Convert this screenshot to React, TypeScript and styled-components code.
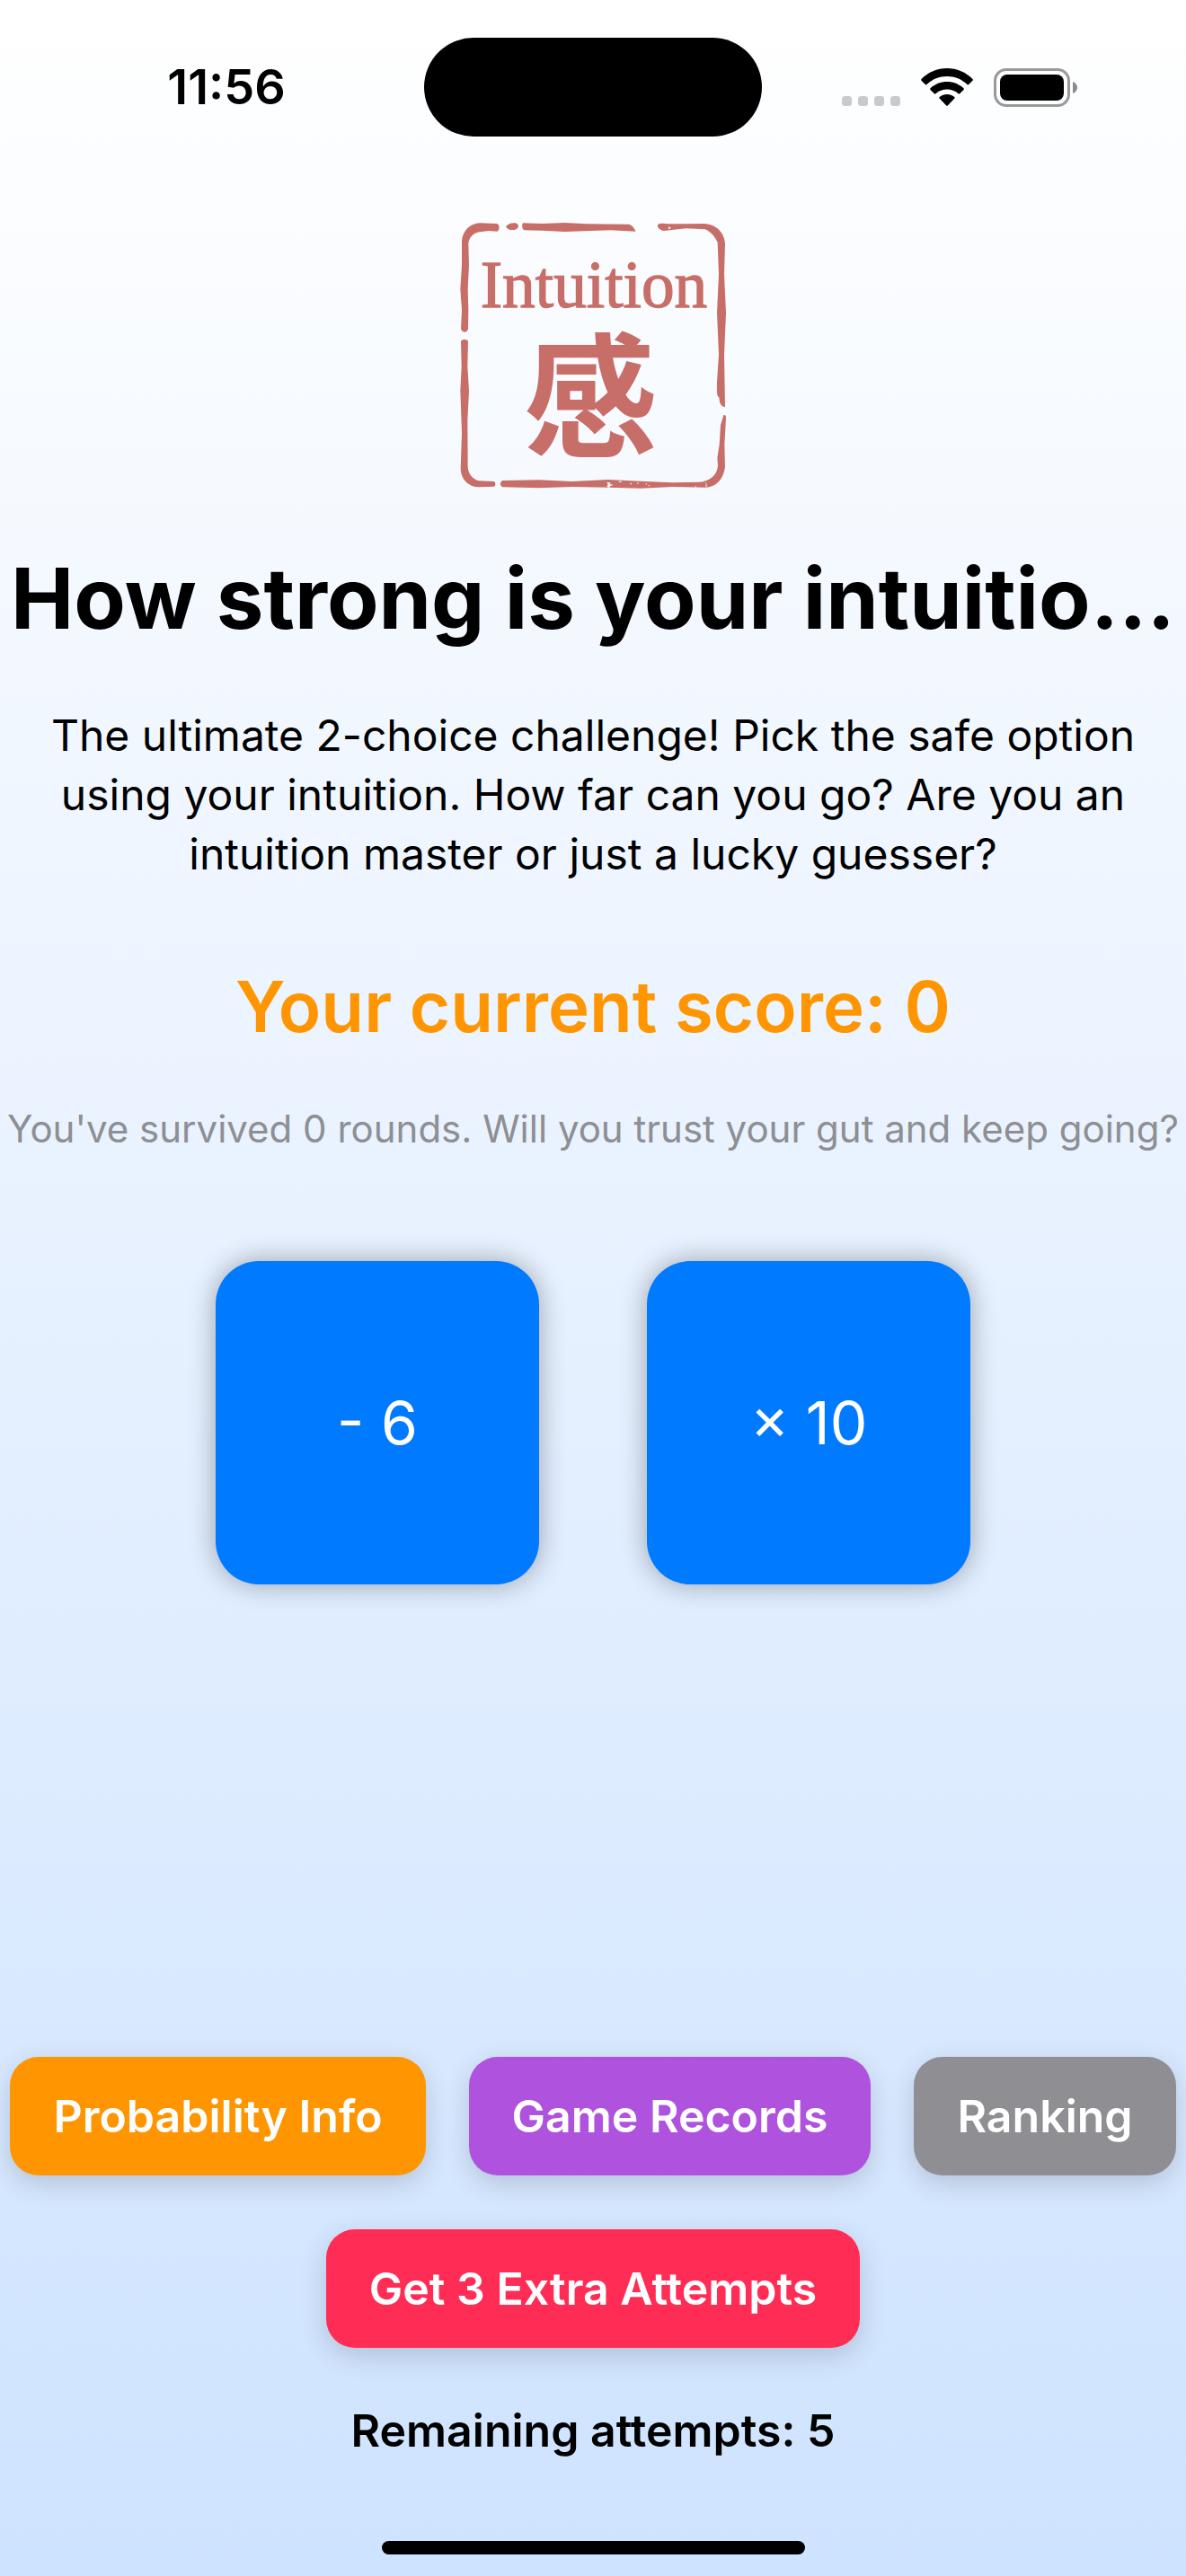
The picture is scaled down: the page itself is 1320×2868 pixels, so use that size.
import React from "react";
import styled, { createGlobalStyle } from "styled-components";

const GlobalStyle = createGlobalStyle`
  *, *::before, *::after { box-sizing: border-box; }
  body {
    margin: 0;
    font-family: Inter, "Liberation Sans", sans-serif;
    color: #000;
  }
`;

const Screen = styled.div`
  display: flex;
  flex-direction: column;
  min-height: 100vh;
  background: linear-gradient(#ffffff, #cee3ff);
`;

const StatusBar = styled.header`
  display: grid;
  grid-template-columns: 1fr auto 1fr;
  align-items: center;
  padding: 42px 0 34px;
`;

const Clock = styled.time`
  justify-self: center;
  padding-left: 32px;
  font-size: 54px;
  font-weight: 600;
  line-height: 60px;
`;

const Island = styled.div`
  width: 376px;
  height: 110px;
  border-radius: 55px;
  background: #000;
`;

const StatusIcons = styled.div`
  display: flex;
  align-items: center;
  justify-self: center;
  gap: 23px;
  padding-right: 32px;
`;

const Main = styled.main`
  flex: 1;
  display: flex;
  flex-direction: column;
  align-items: center;
  gap: 60px;
  padding-top: 60px;
  text-align: center;
`;

const Seal = styled.svg`
  display: block;
  width: 300px;
  height: 300px;
  fill: #c86e69;
`;

const Title = styled.h1`
  max-width: 100%;
  margin: 0;
  font-size: 94px;
  font-weight: 700;
  line-height: 120px;
  white-space: nowrap;
`;

const Lead = styled.p`
  margin: 0;
  padding: 0 48px 28px;
  font-size: 48px;
  line-height: 66px;
`;

const Score = styled.h2`
  margin: 0;
  color: #ff9500;
  font-size: 78px;
  font-weight: 600;
  line-height: 98px;
`;

const Hint = styled.p`
  margin: 0;
  color: #8e8e93;
  font-size: 42px;
  line-height: 54px;
  white-space: nowrap;
`;

const Choices = styled.div`
  display: flex;
  justify-content: center;
  gap: 120px;
  padding: 60px 0;
`;

const ChoiceButton = styled.button`
  width: 360px;
  height: 360px;
  padding: 0;
  border: 0;
  border-radius: 48px;
  background: #007aff;
  box-shadow: 0 0 30px rgba(0, 0, 0, 0.33);
  color: #fff;
  font: 400 66px Inter, "Liberation Sans", sans-serif;
  cursor: pointer;
`;

const Actions = styled.div`
  display: flex;
  flex-wrap: wrap;
  justify-content: center;
  gap: 60px 48px;
  margin-top: auto;
`;

const ActionButton = styled.button<{ $color: string }>`
  height: 132px;
  padding: 0 48px;
  border: 0;
  border-radius: 32px;
  background: ${(p) => p.$color};
  box-shadow: 0 9px 30px rgba(0, 0, 0, 0.16);
  color: #fff;
  font: 600 50px Inter, "Liberation Sans", sans-serif;
  white-space: nowrap;
  cursor: pointer;
`;

const Remaining = styled.p`
  margin: 0;
  font-size: 50px;
  font-weight: 600;
  line-height: 64px;
`;

const HomeArea = styled.footer`
  display: flex;
  justify-content: center;
  padding: 91px 0 24px;
`;

const HomeIndicator = styled.div`
  width: 471px;
  height: 15px;
  border-radius: 8px;
  background: #000;
`;

function SignalDots() {
  return (
    <svg width="65" height="43" viewBox="0 0 65 43" fill="#c9cacb" aria-hidden="true">
      {[0, 18, 36, 54].map((x) => (
        <rect key={x} x={x} y="31" width="11" height="11" rx="3.5" />
      ))}
    </svg>
  );
}

function Wifi() {
  return (
    <svg width="58" height="43" viewBox="0 0 58 43" aria-hidden="true">
      <path d="M29 0C40 0 50 4.400 57.500 12C58 12.500 58 13.200 57.500 13.700L53.200 18C52.700 18.500 52 18.500 51.500 18C45.500 12.200 37.500 9 29 9S12.500 12.200 6.500 18C6 18.500 5.300 18.500 4.800 18L.5 13.700C0 13.200 0 12.500 .5 12C8 4.400 18 0 29 0Z" />
      <path d="M29 15C36 15 42.500 17.600 47.500 22.200C48 22.700 48 23.400 47.500 23.900L43.200 28.200C42.700 28.700 42 28.700 41.500 28.200C38 25.200 33.700 23.600 29 23.600S20 25.200 16.500 28.200C16 28.700 15.300 28.700 14.800 28.200L10.500 23.900C10 23.400 10 22.700 10.500 22.200C15.500 17.600 22 15 29 15Z" />
      <path d="M29 29C32 29 35 30 37.300 31.900C37.900 32.400 37.900 33.100 37.400 33.600L30 41.300C29.400 42 28.600 42 28 41.300L20.600 33.600C20.100 33.100 20.100 32.400 20.700 31.900C23 30 26 29 29 29Z" />
    </svg>
  );
}

function Battery() {
  return (
    <svg width="94" height="43" viewBox="0 0 94 43" aria-hidden="true">
      <rect x="1.500" y="1.500" width="82" height="40" rx="12.500" fill="none" stroke="#999" strokeWidth="3" />
      <rect x="7" y="7" width="71" height="29" rx="8" />
      <path d="M88 15C91 16 93 18.500 93 21.500S91 27 88 28Z" fill="#8a8a8a" />
    </svg>
  );
}

function SealLogo() {
  return (
    <Seal viewBox="30 33 900 900" role="img" aria-label="Intuition 感">
      <path d="M39 394L42 330L37 260L42 180V105C42 70 66 42 102 40L160 42C169 46 169 64 160 68L132 66L102 70C80 72 65 90 64 110L66 180L62 260L64 330L63 394C60 408 44 408 39 394Z" />
      <path d="M189 52C196 42 206 39 222 40C235 45 233 58 220 62C207 65 193 62 189 52Z" />
      <path d="M246 40L310 42L385 39L460 43L600 44C611 47 618 56 622 68L540 64L470 66L385 69L310 65L250 64C242 58 242 46 246 40Z" />
      <path fillRule="evenodd" d="M697 44C706 39 718 43 740 43L850 42C892 44 919 72 921 110L918 210L924 340L918 480L921 655C906 651 902 642 901 622C892 620 894 595 894 570L900 480L894 340L900 210L896 105C890 92 878 72 855 61L790 58L716 66C702 62 692 54 697 44ZM734 52L731 57L736 61L740 56Z" />
      <path d="M39 434C44 427 58 427 63 434L61 520L66 600L61 700L62 855C64 880 80 897 100 901L150 903C156 908 155 917 150 920L100 922C62 921 39 895 38 860L42 740L37 600L41 520Z" />
      <path d="M916 682C921 680 924 682 924 690L919 780L921 855C915 898 890 922 855 923L745 921L640 926L530 923L410 921L300 925L178 922C168 916 168 906 178 900L300 898L410 903L530 897L640 902L745 907L835 905C868 904 896 882 897 850L895 825L902 780L906 715Z" />
      <path fill="#fafcff" d="M524 904L532 909L530 905L540 908L534 912L548 914L538 918L534 925L527 920L530 913ZM564 902L577 902L571 907ZM603 910L609 908L608 914ZM626 909L633 906L630 912ZM655 911L661 908L658 914ZM664 914L671 918L666 919ZM820 920L825 918L825 924ZM855 906L859 909L860 921L855 918L858 914Z" />
      <text
        x="483"
        y="322"
        textAnchor="middle"
        fontFamily="'Liberation Serif', serif"
        fontSize="220"
        stroke="#c86e69"
        strokeWidth="4"
      >
        Intuition
      </text>
      <text
        x="472"
        y="786"
        textAnchor="middle"
        fontFamily="'Noto Sans CJK JP', sans-serif"
        fontWeight="700"
        fontSize="445"
      >
        感
      </text>
    </Seal>
  );
}

const choices = ["- 6", "× 10"];

const actions = [
  { label: "Probability Info", color: "#ff9500" },
  { label: "Game Records", color: "#af52de" },
  { label: "Ranking", color: "#8e8e93" },
  { label: "Get 3 Extra Attempts", color: "#ff2d55" },
];

export default function App() {
  return (
    <>
      <GlobalStyle />
      <Screen>
        <StatusBar>
          <Clock>11:56</Clock>
          <Island />
          <StatusIcons>
            <SignalDots />
            <Wifi />
            <Battery />
          </StatusIcons>
        </StatusBar>
        <Main>
          <SealLogo />
          <Title>How strong is your intuitio…</Title>
          <Lead>
            The ultimate 2-choice challenge! Pick the safe option using your intuition. How far can
            you go? Are you an intuition master or just a lucky guesser?
          </Lead>
          <Score>Your current score: 0</Score>
          <Hint>You've survived 0 rounds. Will you trust your gut and keep going?</Hint>
          <Choices>
            {choices.map((label) => (
              <ChoiceButton key={label} type="button">
                {label}
              </ChoiceButton>
            ))}
          </Choices>
          <Actions>
            {actions.map(({ label, color }) => (
              <ActionButton key={label} type="button" $color={color}>
                {label}
              </ActionButton>
            ))}
          </Actions>
          <Remaining>Remaining attempts: 5</Remaining>
        </Main>
        <HomeArea>
          <HomeIndicator />
        </HomeArea>
      </Screen>
    </>
  );
}
